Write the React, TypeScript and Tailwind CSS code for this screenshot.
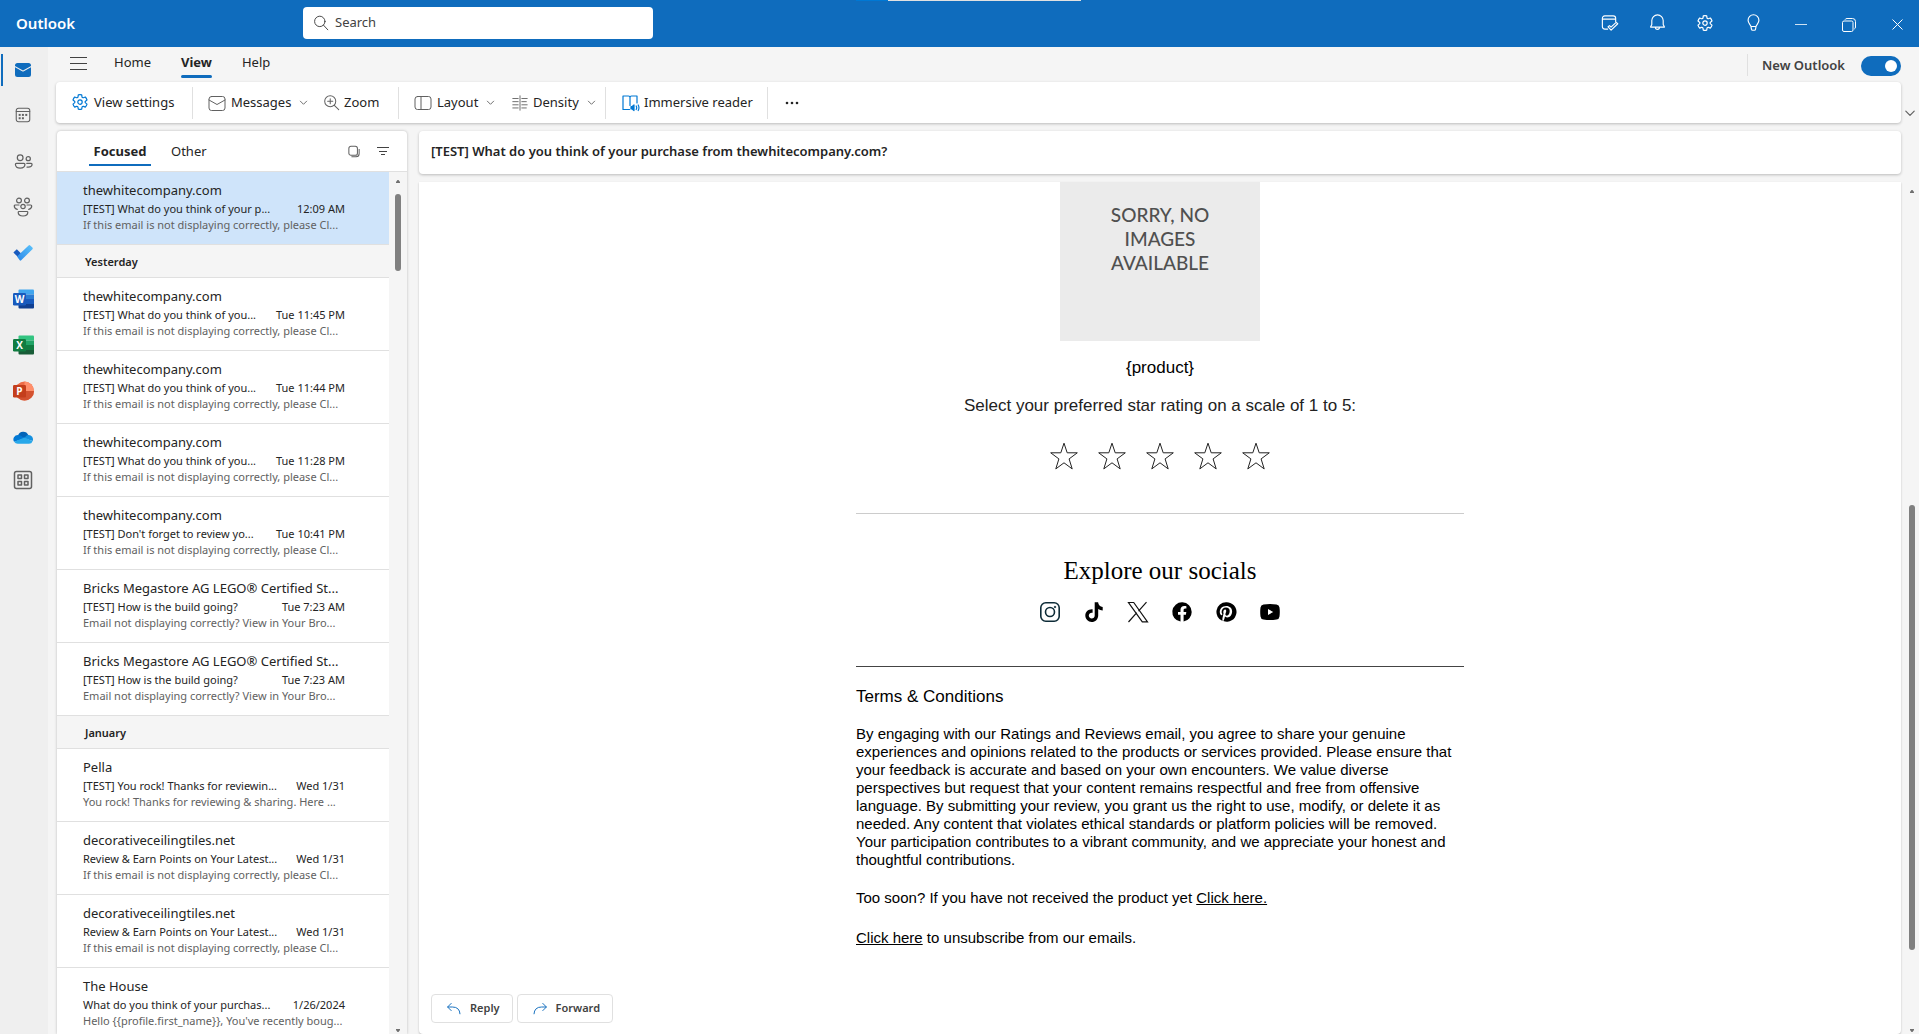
import type { ReactNode } from "react";

type IconProps = { size?: number; className?: string; sw?: number; children: ReactNode };

function Icon({ size = 20, className = "", sw = 1, children }: IconProps) {
  return (
    <svg
      width={size}
      height={size}
      viewBox="0 0 20 20"
      fill="none"
      stroke="currentColor"
      strokeWidth={sw}
      strokeLinecap="round"
      strokeLinejoin="round"
      className={`shrink-0 ${className}`}
      aria-hidden="true"
    >
      {children}
    </svg>
  );
}

const GearPaths = () => (
  <>
    <path d="M8.300 1.900a8 8 0 0 1 3.400 0l.3 1.900c.1.700.8 1.100 1.500.9l1.800-.7a8 8 0 0 1 1.700 3l-1.500 1.200a1.100 1.100 0 0 0 0 1.700l1.500 1.200a8 8 0 0 1-1.700 3l-1.800-.7c-.7-.2-1.400.2-1.500.9l-.3 1.900a8 8 0 0 1-3.400 0l-.3-1.900c-.1-.7-.8-1.100-1.500-.9l-1.800.7a8 8 0 0 1-1.700-3l1.500-1.200a1.100 1.100 0 0 0 0-1.700L3 7a8 8 0 0 1 1.700-3l1.800.7c.7.200 1.400-.2 1.500-.9z" />
    <circle cx="10" cy="9.100" r="2.200" />
  </>
);

const ChevronDown = ({ size = 10, className = "" }: { size?: number; className?: string }) => (
  <Icon size={size} sw={2} className={className}>
    <path d="M3 7l7 7 7-7" />
  </Icon>
);

/* ---------- title bar ---------- */

function TitleBar() {
  const btn = "flex h-8 w-12 items-center justify-center text-white";
  return (
    <header className="relative flex h-[47px] shrink-0 items-center overflow-hidden bg-[#0f6cbd]">
      <div className="absolute left-[856px] top-0 flex h-px w-[225px]">
        <span className="w-8 bg-[#0078d4]" />
        <span className="flex-1 bg-[#e1e1e1]" />
      </div>
      <h1 className="w-[303px] shrink-0 pl-4 text-[15px] font-semibold text-white">Outlook</h1>
      <label className="mb-0.5 flex h-8 w-[350px] items-center gap-1.5 rounded-[4px] bg-white px-2.5">
        <Icon size={16} className="text-[#424242]" sw={1.200}>
          <circle cx="8.500" cy="8" r="6.500" />
          <path d="M13.200 12.800L18.500 18.500" />
        </Icon>
        <input
          type="text"
          aria-label="Search"
          placeholder="Search"
          className="min-w-0 flex-1 bg-transparent text-[13px] text-[#242424] outline-none placeholder:text-[#424242]"
        />
      </label>
      <div className="-mr-0.5 ml-auto flex items-center">
        <button className={`${btn} mb-0.5`} aria-label="My day">
          <Icon size={19} sw={1.200}>
            <path d="M8 17H5a2.500 2.500 0 0 1-2.500-2.500v-9A2.500 2.500 0 0 1 5 3h9a2.500 2.500 0 0 1 2.500 2.500V9M2.500 6.500h14" />
            <path d="M8.500 14.500l1.500-1.200 1.600 1.500 5.400-5 1.700 1.500-7 6.700z" />
          </Icon>
        </button>
        <button className={`${btn} mb-0.5`} aria-label="Notifications">
          <Icon size={19} sw={1.200}>
            <path d="M10 2a6 6 0 0 0-6 6v4l-1.300 2.800h14.600L16 12V8a6 6 0 0 0-6-6zM7.800 15a2.200 2.200 0 0 0 4.400 0" />
          </Icon>
        </button>
        <button className={btn} aria-label="Settings">
          <Icon size={20} sw={1.200}>
            <GearPaths />
          </Icon>
        </button>
        <button className={`${btn} mb-0.5`} aria-label="Tips">
          <Icon size={19} sw={1.200}>
            <path d="M10 1.800a5.700 5.700 0 0 0-5.700 5.700c0 3 2 4.300 3 6.500l.6 3.200c.1.600.5.900 1.100.900h2c.6 0 1-.3 1.100-.9l.6-3.200c1-2.200 3-3.500 3-6.500A5.700 5.700 0 0 0 10 1.800zM7.400 14.200h5.200" />
          </Icon>
        </button>
        <button className={btn} aria-label="Minimize">
          <span className="mt-0.5 h-px w-3 bg-white/80" />
        </button>
        <button className={btn} aria-label="Restore">
          <svg width="14" height="14" viewBox="0 0 14 14" fill="none" stroke="currentColor" className="mt-0.5">
            <rect x="0.500" y="3" width="10.500" height="10.500" rx="1.500" />
            <path d="M3 1.700Q3.500.500 5 .500h5.500a3 3 0 0 1 3 3V9q0 1.500-1.200 2" />
          </svg>
        </button>
        <button className={btn} aria-label="Close">
          <svg width="11" height="11" viewBox="0 0 11 11" fill="none" stroke="currentColor" className="mt-0.5">
            <path d="M.5.5l10 10M10.500.5l-10 10" />
          </svg>
        </button>
      </div>
    </header>
  );
}

/* ---------- app rail ---------- */

type OfficeProps = { letter: string; shades: [string, string, string, string]; tile: string; round?: boolean };

function OfficeIcon({ letter, shades, tile, round }: OfficeProps) {
  const id = `clip-${letter}`;
  return (
    <svg width="21" height="20" viewBox="0 0 21 20" aria-hidden="true">
      <clipPath id={id}>
        {round ? <circle cx="11.500" cy="10" r="9.500" /> : <rect x="5.500" y="0.500" width="15.500" height="19" rx="1" />}
      </clipPath>
      <g clipPath={`url(#${id})`}>
        {round ? (
          <>
            <rect width="21" height="20" fill={shades[1]} />
            <path d="M11.500 0H21v10h-9.500z" fill={shades[0]} />
            <path d="M0 10h21v10H0z" fill={shades[2]} />
          </>
        ) : (
          <>
            <rect width="21" height="5.500" fill={shades[0]} />
            <rect y="5.500" width="21" height="4.500" fill={shades[1]} />
            <rect y="10" width="21" height="5" fill={shades[2]} />
            <rect y="15" width="21" height="5" fill={shades[3]} />
          </>
        )}
      </g>
      <rect x="0" y="4" width="13" height="12.500" rx="1.200" fill={tile} />
      <text
        x="6.500"
        y="14"
        textAnchor="middle"
        fontSize="10"
        fontWeight="700"
        fill="#fff"
        fontFamily="Open Sans, sans-serif"
      >
        {letter}
      </text>
    </svg>
  );
}

function Rail() {
  const items: { label: string; icon: ReactNode; active?: boolean }[] = [
    {
      label: "Mail",
      active: true,
      icon: (
        <svg width="16" height="14" viewBox="0 0 16 14" aria-hidden="true">
          <path d="M0 4.300l7.600 4.200q.4.200.8 0L16 4.300V11.500A2.500 2.500 0 0 1 13.500 14h-11A2.500 2.500 0 0 1 0 11.500z" fill="#0f6cbd" />
          <path d="M0 3.100V2.500A2.500 2.500 0 0 1 2.500 0h11A2.500 2.500 0 0 1 16 2.500v.6L8 7.400z" fill="#0f6cbd" />
        </svg>
      ),
    },
    {
      label: "Calendar",
      icon: (
        <Icon size={18} sw={1.200}>
          <rect x="2.500" y="2.500" width="15" height="15" rx="2.500" />
          <path d="M2.500 6.200h15" />
          <g fill="currentColor" stroke="none">
            <rect x="8.800" y="8.800" width="2.200" height="2.200" />
            <rect x="12.500" y="8.800" width="2.200" height="2.200" />
            <rect x="5.200" y="8.800" width="2.200" height="2.200" />
            <rect x="5.200" y="12.500" width="2.200" height="2.200" />
            <rect x="8.800" y="12.500" width="2.200" height="2.200" />
          </g>
        </Icon>
      ),
    },
    {
      label: "People",
      icon: (
        <Icon size={19} sw={1.300}>
          <circle cx="6.500" cy="6" r="3" />
          <circle cx="15" cy="7" r="2.200" />
          <path d="M2.500 12h8q1 0 1 1c0 2.500-2 4-5 4s-5-1.500-5-4q0-1 1-1zM13.500 12H18q1 0 1 1c0 2-1.500 3-4 3l-1.300-.1" />
        </Icon>
      ),
    },
    {
      label: "Groups",
      icon: (
        <Icon size={20} sw={1.200}>
          <circle cx="6" cy="3.500" r="2.400" />
          <circle cx="14" cy="3.500" r="2.400" />
          <circle cx="10" cy="9.500" r="2.200" />
          <path d="M6 14.500h8q.8 0 .8.8c0 2-1.800 3.700-4.800 3.700s-4.800-1.700-4.800-3.700q0-.8.8-.8zM6 8H2.300q-1 0-1 1c0 2 1.200 3 3 3.400M14 8h3.700q1 0 1 1c0 2-1.200 3-3 3.400" />
        </Icon>
      ),
    },
    {
      label: "To Do",
      icon: (
        <svg width="20" height="16" viewBox="0 0 20 16" aria-hidden="true">
          <defs>
            <linearGradient id="todo" x1="0" x2="1" y1="1" y2="0">
              <stop offset="0" stopColor="#2a87e8" />
              <stop offset="1" stopColor="#5cc3fb" />
            </linearGradient>
          </defs>
          <path d="M.4 7.600L3.800 4.200l6.800 6.800-3.300 3.300z" fill="#195abd" />
          <path d="M4 11.500L15.600.4q.8-.7 1.600 0l2.200 2.200q.7.800 0 1.600L8.200 15.300q-.7.700-1.500 0z" fill="url(#todo)" />
        </svg>
      ),
    },
    { label: "Word", icon: <OfficeIcon letter="W" tile="#185abd" shades={["#41a5ee", "#2b7cd3", "#185abd", "#103f91"]} /> },
    { label: "Excel", icon: <OfficeIcon letter="X" tile="#107c41" shades={["#33c481", "#21a366", "#107c41", "#185c37"]} /> },
    {
      label: "PowerPoint",
      icon: <OfficeIcon letter="P" tile="#c43e1c" round shades={["#ff8f6b", "#ed6c47", "#d35230", "#d35230"]} />,
    },
    {
      label: "OneDrive",
      icon: (
        <svg width="20" height="13" viewBox="0 0 20 13" aria-hidden="true">
          <path d="M5 4.500A5.500 5.500 0 0 1 15.300 4L13 8z" fill="#0364b8" />
          <path d="M5 3.900a4.500 4.500 0 0 0-3.900 6.900L12 7.500 7.500 4.600Q6.300 3.900 5 3.900z" fill="#0078d4" />
          <path d="M15.300 4a4.300 4.300 0 0 1 4.300 6L11 7.200l2.600-2.700z" fill="#1490df" />
          <path d="M1.100 10.800L11.500 6.500l8.100 3.700A4 4 0 0 1 16 12.800H4.700a4.500 4.500 0 0 1-3.600-2z" fill="#28a8ea" />
        </svg>
      ),
    },
    {
      label: "More apps",
      icon: (
        <Icon size={20} sw={1.500}>
          <rect x="1.500" y="1.500" width="17" height="17" rx="2" />
          <rect x="5" y="5" width="3.500" height="3.500" />
          <rect x="11.500" y="5" width="3.500" height="3.500" />
          <rect x="5" y="11.500" width="3.500" height="3.500" />
          <rect x="11.500" y="11.500" width="3.500" height="3.500" />
        </Icon>
      ),
    },
  ];
  return (
    <nav className="flex w-12 shrink-0 flex-col bg-[#efefef]" aria-label="Apps">
      {items.map((it) => (
        <button
          key={it.label}
          aria-label={it.label}
          className="relative flex h-[46px] w-[46px] items-center justify-center text-[#616161] first:h-[45px] last:h-10"
        >
          {it.active && <span className="absolute left-px top-[7px] h-8 w-0.5 bg-[#0f6cbd]" />}
          {it.icon}
        </button>
      ))}
    </nav>
  );
}

/* ---------- ribbon ---------- */

function RibbonTabs() {
  return (
    <div className="flex h-[35px] shrink-0 items-center pl-2 text-[13px] text-[#242424]">
      <button aria-label="Navigation pane" className="flex h-8 w-11 items-center pb-0.5 pl-3.5">
        <svg width="17" height="13" viewBox="0 0 17 13" aria-hidden="true" fill="#424242">
          <path d="M0 0h17v1H0zM0 6h17v1H0zM0 12h17v1H0z" />
        </svg>
      </button>
      <button className="ml-2.5 h-full px-1 pb-1">Home</button>
      <button className="relative ml-[22px] h-full px-1 pb-1 font-bold">
        View
        <span className="absolute bottom-1 left-1 right-1 h-[3px] rounded-full bg-[#0f6cbd]" />
      </button>
      <button className="ml-[22px] h-full px-1 pb-1">Help</button>
      <label className="ml-auto flex items-center gap-4 border-l border-[#e0e0e0] pl-3.5 pr-[18px] pt-0.5 font-semibold text-[#424242]">
        New Outlook
        <input type="checkbox" defaultChecked className="peer sr-only" />
        <span className="flex h-5 w-10 items-center justify-end rounded-full bg-[#0f6cbd] pr-1">
          <span className="h-3 w-3 rounded-full bg-white" />
        </span>
      </label>
    </div>
  );
}

function Divider() {
  return <span className="h-8 w-px shrink-0 bg-[#e0e0e0]" />;
}

function Ribbon() {
  const b = "flex h-8 items-center gap-1";
  return (
    <div className="flex shrink-0 items-center pl-2">
      <div className="flex h-[41px] min-w-0 flex-1 items-center rounded-[4px] bg-white text-[13px] text-[#242424] shadow-[0_1px_3px_rgba(0,0,0,0.24)]">
        <button className={`${b} w-[136px] pl-3.5`}>
          <Icon size={20} sw={1.200} className="text-[#0078d4]">
            <GearPaths />
          </Icon>
          View settings
        </button>
        <Divider />
        <button className={`${b} w-[118px] pl-3.5`}>
          <Icon size={20} className="text-[#616161]">
            <rect x="2" y="3.500" width="16" height="14" rx="2.500" />
            <path d="M2 7l8 4.500L18 7" />
          </Icon>
          Messages
          <ChevronDown size={9} className="ml-1 text-[#616161]" />
        </button>
        <button className={`${b} w-[87px] pl-3`}>
          <Icon size={17} className="text-[#616161]" sw={1.200}>
            <circle cx="8.500" cy="8.500" r="6.500" />
            <path d="M13.300 13.300L18.500 18.500M5.500 8.500h6M8.500 5.500v6" />
          </Icon>
          Zoom
        </button>
        <Divider />
        <button className={`${b} w-[100px] pl-3.5`}>
          <Icon size={20} className="text-[#616161]">
            <rect x="2" y="3.500" width="16" height="13" rx="2.500" />
            <path d="M8 3.500v13" />
          </Icon>
          Layout
          <ChevronDown size={9} className="ml-1 text-[#616161]" />
        </button>
        <button className={`${b} w-[106px] pl-3`}>
          <Icon size={18} className="text-[#616161]">
            <path d="M2 5h6M2 8.500h6M2 12h6M2 15.500h6M12 5h6M12 8.500h5M12 12h6M12 15.500h5M10 2v16" />
          </Icon>
          Density
          <ChevronDown size={9} className="ml-1 text-[#616161]" />
        </button>
        <Divider />
        <button className={`${b} w-[161px] pl-3.5`}>
          <Icon size={20} className="text-[#0078d4]" sw={1.200}>
            <path d="M9.500 16.500H3V3h5.500Q10 3 10 4.500v8M10 4.500Q10 3 11.500 3H17v7" />
            <path d="M11 13.500h1.200l1.800-1.600v5.700l-1.800-1.600H11z" fill="currentColor" />
            <path d="M16.200 13q1 1.700 0 3.500M18.200 12q1.500 2.700 0 5.500" />
          </Icon>
          Immersive reader
        </button>
        <Divider />
        <button aria-label="More options" className="flex h-8 w-12 items-center justify-center">
          <svg width="14" height="4" viewBox="0 0 14 4" fill="#242424" aria-hidden="true">
            <circle cx="2" cy="2" r="1.300" />
            <circle cx="7" cy="2" r="1.300" />
            <circle cx="12" cy="2" r="1.300" />
          </svg>
        </button>
      </div>
      <button aria-label="Ribbon options" className="flex h-[41px] w-[18px] items-end justify-center pb-1 text-[#616161]">
        <ChevronDown size={12} />
      </button>
    </div>
  );
}

/* ---------- message list ---------- */

type Mail = { from: string; subject: string; time: string; preview: string; selected?: boolean };
const CL = "If this email is not displaying correctly, please Cl...";
const ask = (time: string): Mail => ({
  from: "thewhitecompany.com",
  subject: "[TEST] What do you think of you...",
  time,
  preview: CL,
});
const brick: Mail = {
  from: "Bricks Megastore AG LEGO® Certified St...",
  subject: "[TEST] How is the build going?",
  time: "Tue 7:23 AM",
  preview: "Email not displaying correctly? View in Your Bro...",
};
const tiles: Mail = {
  from: "decorativeceilingtiles.net",
  subject: "Review & Earn Points on Your Latest...",
  time: "Wed 1/31",
  preview: CL,
};

const groups: { title?: string; mails: Mail[] }[] = [
  {
    mails: [
      {
        from: "thewhitecompany.com",
        subject: "[TEST] What do you think of your p...",
        time: "12:09 AM",
        preview: CL,
        selected: true,
      },
    ],
  },
  {
    title: "Yesterday",
    mails: [
      ask("Tue 11:45 PM"),
      ask("Tue 11:44 PM"),
      ask("Tue 11:28 PM"),
      { ...ask("Tue 10:41 PM"), subject: "[TEST] Don't forget to review yo..." },
      brick,
      brick,
    ],
  },
  {
    title: "January",
    mails: [
      {
        from: "Pella",
        subject: "[TEST] You rock! Thanks for reviewin...",
        time: "Wed 1/31",
        preview: "You rock! Thanks for reviewing & sharing. Here ...",
      },
      tiles,
      tiles,
      {
        from: "The House",
        subject: "What do you think of your purchas...",
        time: "1/26/2024",
        preview: "Hello {{profile.first_name}}, You've recently boug...",
      },
    ],
  },
];

function MailRow({ mail }: { mail: Mail }) {
  return (
    <li
      className={`flex h-[73px] shrink-0 flex-col justify-center whitespace-nowrap border-b border-[#e0e0e0] pb-1 pl-[26px] pr-11 text-[11px] leading-4 text-[#242424] ${
        mail.selected ? "bg-[#cfe4fa]" : "bg-white"
      }`}
    >
      <p className="text-[13px] leading-[22px]">{mail.from}</p>
      <p className="flex justify-between">
        <span>{mail.subject}</span>
        <time>{mail.time}</time>
      </p>
      <p className="text-[#616161]">{mail.preview}</p>
    </li>
  );
}

function ScrollArrow({ down = false }: { down?: boolean }) {
  return (
    <svg width="4" height="3" viewBox="0 0 4 3" fill="#707070" aria-hidden="true">
      <path d={down ? "M0 0h4v1L2.500 3h-1L0 1z" : "M0 3h4V2L2.500 0h-1L0 2z"} />
    </svg>
  );
}

function MessageList() {
  return (
    <section className="flex w-[350px] shrink-0 flex-col overflow-hidden rounded-t-[4px] bg-white shadow-[0_0_3px_rgba(0,0,0,0.24)]">
      <div className="flex h-[41px] shrink-0 items-center border-b border-[#e0e0e0] pl-8 pr-4 text-[13px] text-[#242424]">
        <button className="relative h-full w-[62px] pt-0.5 text-center font-bold">
          Focused
          <span className="absolute inset-x-0 bottom-[5px] h-0.5 bg-[#0f6cbd]" />
        </button>
        <button className="ml-5 h-full pt-0.5">Other</button>
        <button aria-label="Select" className="ml-auto text-[#616161]">
          <svg width="12" height="13" viewBox="0 0 14 14" fill="none" stroke="currentColor" strokeWidth="1.200" aria-hidden="true">
            <rect x="1" y="1" width="10" height="10.500" rx="2.500" />
            <path d="M4 13.200h5.500a3.500 3.500 0 0 0 3.500-3.500V4" />
          </svg>
        </button>
        <button aria-label="Filter" className="ml-4 mr-px text-[#424242]">
          <svg width="14" height="12" viewBox="0 0 14 12" fill="currentColor" aria-hidden="true">
            <path d="M1 2h12v1H1zM3 6h8v1H3zM5 9h4v1H5z" />
          </svg>
        </button>
      </div>
      <div className="flex min-h-0 flex-1">
        <div className="flex min-w-0 flex-1 flex-col overflow-hidden">
          {groups.map((g, i) => (
            <div key={i} className="shrink-0">
              {g.title && (
                <h2 className="flex h-[33px] items-center border-b border-[#e0e0e0] bg-[#f5f5f5] pl-7 pt-0.5 text-[11px] font-semibold text-[#242424]">
                  {g.title}
                </h2>
              )}
              <ul>
                {g.mails.map((m, j) => (
                  <MailRow key={j} mail={m} />
                ))}
              </ul>
            </div>
          ))}
        </div>
        <div className="flex w-[18px] shrink-0 flex-col items-center bg-[#f5f5f5] pb-0.5 pt-2">
          <ScrollArrow />
          <span className="mt-[11px] h-[77px] w-1.5 rounded-full bg-[#808080]" />
          <span className="mt-auto">
            <ScrollArrow down />
          </span>
        </div>
      </div>
    </section>
  );
}

/* ---------- reading pane ---------- */

function Star() {
  return (
    <svg width="28" height="28" viewBox="0 0 28 28" fill="none" stroke="#222" aria-hidden="true">
      <path d="M14 1.200l3.200 9.600h10.100l-8.200 6.100 3.100 10-8.200-6.100-8.200 6.100 3.100-10L.7 10.800h10.100z" />
    </svg>
  );
}

const socials: { label: string; icon: ReactNode }[] = [
  {
    label: "Instagram",
    icon: (
      <g fill="none" stroke="#0e2c38" strokeWidth="1.600">
        <rect x="2.800" y="2.800" width="18.400" height="18.400" rx="5" />
        <circle cx="12" cy="12" r="4.500" />
        <circle cx="17" cy="7" r="0.800" fill="#0e2c38" strokeWidth="0.800" />
      </g>
    ),
  },
  {
    label: "TikTok",
    icon: (
      <path d="M12.700 2.200h3.400c.2 2.700 1.900 4.500 4.600 4.800v3.400c-1.700 0-3.200-.5-4.500-1.400v6.500c0 3.800-2.900 6.500-6.500 6.500s-6.400-2.800-6.400-6.400c0-3.900 3.300-6.800 7.300-6.300v3.500c-1.900-.5-3.800.8-3.800 2.800 0 1.600 1.300 2.900 2.900 2.900 1.700 0 3-1.300 3-3.100z" />
    ),
  },
  {
    label: "X",
    icon: (
      <path
        d="M2.500 2.500h5.200l13.800 19.300h-5.200zM20.500 2.200l-8 9M2.500 22l8.300-9.300"
        fill="none"
        stroke="#111"
        strokeWidth="1.200"
      />
    ),
  },
  {
    label: "Facebook",
    icon: (
      <path d="M21.700 12A9.700 9.700 0 1 0 10.500 21.600v-6.800H8V12h2.500V9.800c0-2.500 1.500-3.800 3.700-3.800 1 0 2.200.2 2.200.2v2.400h-1.200c-1.200 0-1.600.8-1.600 1.500V12h2.700l-.4 2.800h-2.300v6.800A9.700 9.700 0 0 0 21.700 12z" />
    ),
  },
  {
    label: "Pinterest",
    icon: (
      <path d="M12 2.300a9.700 9.700 0 0 0-3.500 18.700c-.1-.8-.2-2 0-2.900l1.100-4.800s-.3-.6-.3-1.400c0-1.300.8-2.300 1.700-2.300.8 0 1.200.6 1.200 1.300 0 .8-.5 2-.8 3.100-.2.900.5 1.700 1.400 1.700 1.700 0 2.900-2.200 2.900-4.700 0-2-1.300-3.400-3.700-3.400-2.700 0-4.400 2-4.400 4.300 0 .8.2 1.300.6 1.800.2.200.2.300.1.500l-.2.800c0 .2-.2.300-.5.200-1.300-.5-1.800-1.900-1.800-3.500 0-2.600 2.200-5.700 6.500-5.700 3.500 0 5.800 2.500 5.800 5.200 0 3.600-2 6.200-4.900 6.200-1 0-1.900-.5-2.200-1.100l-.6 2.400c-.2.800-.7 1.600-1.100 2.300A9.700 9.700 0 1 0 12 2.300z" />
    ),
  },
  {
    label: "YouTube",
    icon: (
      <path
        fillRule="evenodd"
        d="M5.500 4.500Q12 3.500 18.500 4.500q2.700.3 3 3 .6 4.500 0 9-.3 2.700-3 3-6.500 1-13 0-2.700-.3-3-3-.6-4.500 0-9 .3-2.700 3-3zM10 9v6l5.200-3z"
      />
    ),
  },
];

function EmailBody() {
  return (
    <article className="mx-auto flex w-[608px] flex-col font-['Liberation_Sans',Arial,sans-serif] text-[15px] leading-[18px] text-black">
      <div className="mx-auto h-[159px] w-[200px] bg-[#ebebeb] pt-[21px] text-center font-['Lato',sans-serif] text-[19px] font-medium leading-6 text-[#505050]">
        SORRY, NO
        <br />
        IMAGES
        <br />
        AVAILABLE
      </div>
      <p className="mt-[17px] text-center text-[17px] leading-5">{"{product}"}</p>
      <p className="mt-[18px] text-center text-[17px] leading-5 text-[#222]">
        Select your preferred star rating on a scale of 1 to 5:
      </p>
      <div className="mt-[26px] flex justify-center gap-5">
        {[1, 2, 3, 4, 5].map((n) => (
          <button key={n} aria-label={`${n} star`}>
            <Star />
          </button>
        ))}
      </div>
      <hr className="mt-[43px] border-[#ccc]" />
      <h2 className="mt-[41px] text-center font-['Liberation_Serif','Times_New_Roman',serif] text-[25px] leading-8">
        Explore our socials
      </h2>
      <div className="mt-[13px] flex justify-center gap-5">
        {socials.map((s) => (
          <a key={s.label} href="#" aria-label={s.label}>
            <svg width="24" height="24" viewBox="0 0 24 24" aria-hidden="true">
              {s.icon}
            </svg>
          </a>
        ))}
      </div>
      <hr className="mt-[42px] border-[#444]" />
      <h3 className="mt-5 text-[17px] leading-5">Terms &amp; Conditions</h3>
      <p className="mt-[18px]">
        By engaging with our Ratings and Reviews email, you agree to share your genuine experiences and opinions related
        to the products or services provided. Please ensure that your feedback is accurate and based on your own
        encounters. We value diverse perspectives but request that your content remains respectful and free from
        offensive language. By submitting your review, you grant us the right to use, modify, or delete it as needed.
        Any content that violates ethical standards or platform policies will be removed. Your participation contributes
        to a vibrant community, and we appreciate your honest and thoughtful contributions.
      </p>
      <p className="mt-5">
        Too soon? If you have not received the product yet{" "}
        <a href="#" className="underline">
          Click here.
        </a>
      </p>
      <p className="mt-[22px]">
        <a href="#" className="underline">
          Click here
        </a>{" "}
        to unsubscribe from our emails.
      </p>
    </article>
  );
}

function ReadingPane() {
  const btn =
    "flex h-[29px] items-center gap-2 rounded-[4px] border border-[#e0e0e0] pl-3.5 pr-3 text-[11px] font-semibold text-[#424242]";
  return (
    <section className="ml-3 flex min-w-0 flex-1 flex-col">
      <div className="mr-[18px] flex h-[43px] shrink-0 items-center rounded-[4px] bg-white pb-0.5 pl-3 shadow-[0_1px_3px_rgba(0,0,0,0.24)]">
        <h2 className="text-[13px] font-semibold text-[#242424]">
          [TEST] What do you think of your purchase from thewhitecompany.com?
        </h2>
      </div>
      <div className="mt-2 flex min-h-0 flex-1">
        <div className="flex min-w-0 flex-1 flex-col rounded-b-[4px] bg-white pb-[11px] shadow-[0_1px_2px_rgba(0,0,0,0.24)]">
          <EmailBody />
          <div className="mt-auto flex gap-1 pl-3">
            <button className={btn}>
              <Icon size={16} className="text-[#0f6cbd]" sw={1.200}>
                <path d="M6.500 3L2 7.500 6.500 12M2.300 7.500H8q9 0 9.500 8.500" />
              </Icon>
              Reply
            </button>
            <button className={btn}>
              <Icon size={16} className="text-[#0f6cbd]" sw={1.200}>
                <path d="M13.500 3L18 7.500 13.500 12M17.700 7.500H12q-9 0-9.500 8.500" />
              </Icon>
              Forward
            </button>
          </div>
        </div>
        <div className="flex w-[18px] shrink-0 flex-col items-center pb-0.5 pl-1 pt-2">
          <ScrollArrow />
          <span className="mt-auto h-[445px] w-1.5 rounded-full bg-[#808080]" />
          <span className="mt-[79px]">
            <ScrollArrow down />
          </span>
        </div>
      </div>
    </section>
  );
}

export default function App() {
  return (
    <div className="flex h-screen flex-col overflow-hidden bg-[#f5f5f5] font-['Noto_Sans','Open_Sans',sans-serif]">
      <TitleBar />
      <div className="flex min-h-0 flex-1">
        <Rail />
        <main className="flex min-w-0 flex-1 flex-col">
          <RibbonTabs />
          <Ribbon />
          <div className="mt-2 flex min-h-0 flex-1 pl-[9px]">
            <MessageList />
            <ReadingPane />
          </div>
        </main>
      </div>
    </div>
  );
}
